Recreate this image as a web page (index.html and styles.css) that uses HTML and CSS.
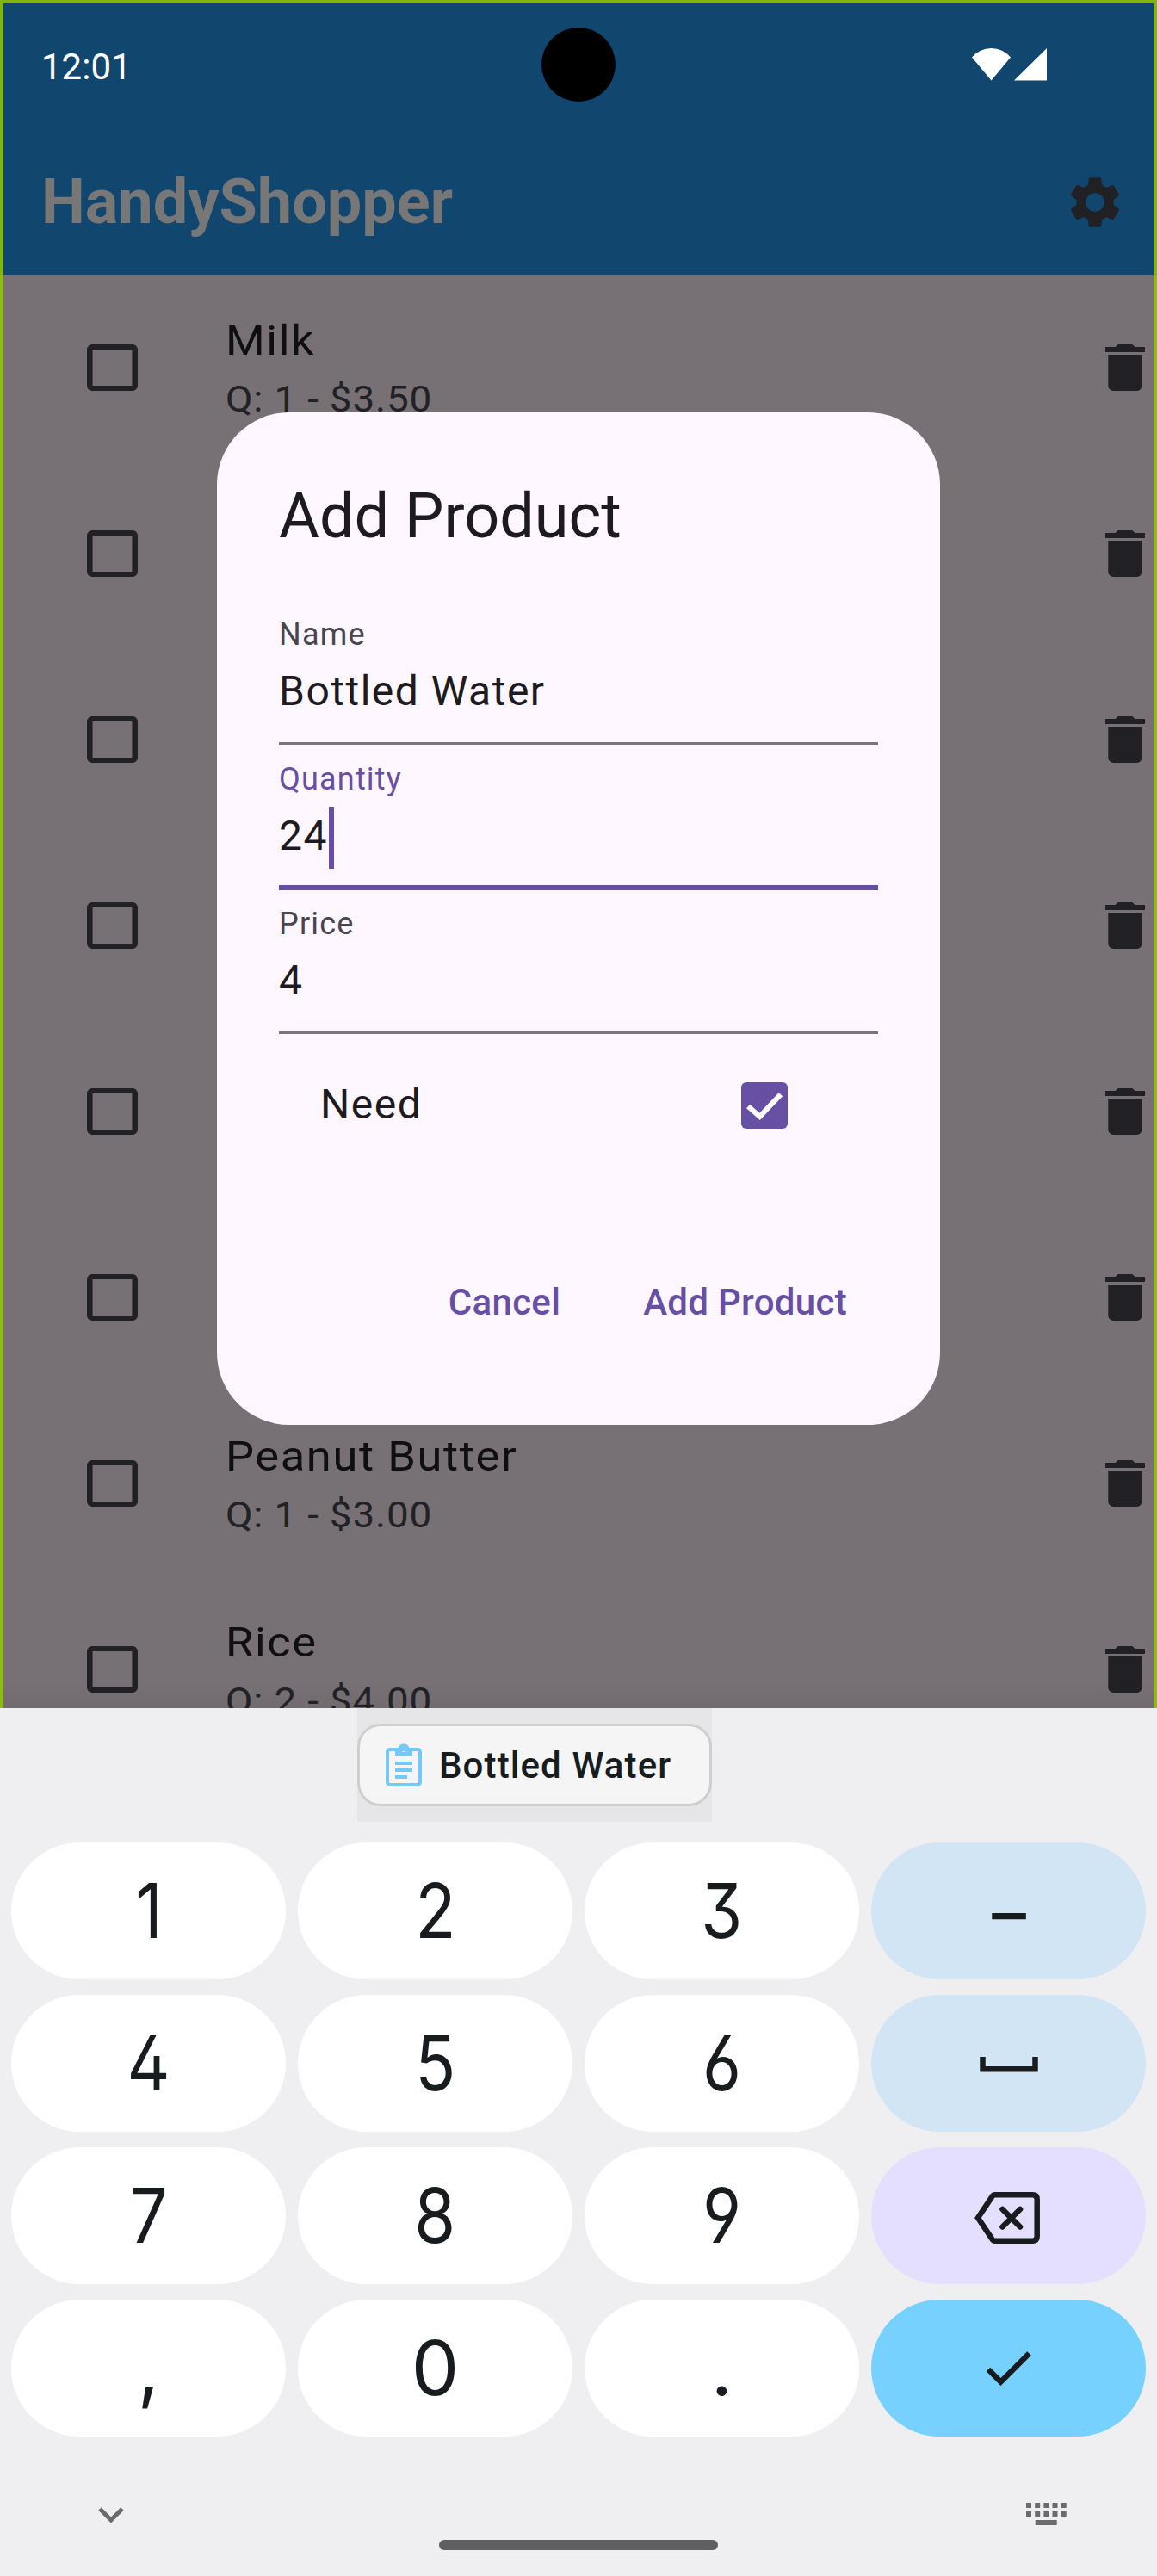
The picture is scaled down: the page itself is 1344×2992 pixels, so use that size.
FILE: index.html
```html
<!DOCTYPE html>
<html lang="en">
<head>
<meta charset="utf-8">
<title>HandyShopper</title>
<link rel="stylesheet" href="styles.css">
</head>
<body>
<svg class="defs" aria-hidden="true">
  <symbol id="box" viewBox="3 3 18 18" preserveAspectRatio="none"><path d="M19 5v14H5V5h14m0-2H5c-1.1 0-2 .9-2 2v14c0 1.1.9 2 2 2h14c1.1 0 2-.9 2-2V5c0-1.1-.9-2-2-2z"/></symbol>
  <symbol id="trash" viewBox="5 3 14 18" preserveAspectRatio="none"><path d="M6 19c0 1.1.9 2 2 2h8c1.1 0 2-.9 2-2V7H6v12zM19 4h-3.5l-1-1h-5l-1 1H5v2h14V4z"/></symbol>
</svg>
<div class="screen">
  <div class="app">
    <header class="top">
      <div class="status">
        <span class="time">12:01</span>
        <svg class="signals" width="87" height="38" viewBox="0 0 87 38"><path d="M22.5 37.5L0 10.5Q9 0 22.500 0T45 10.500z"/><path d="M49 37.500h38V0z"/></svg>
      </div>
      <div class="bar">
        <h1 class="brand">HandyShopper</h1>
        <svg class="gear" width="72" height="72" viewBox="0 0 24 24"><path d="M19.14 12.94c.04-.3.06-.61.06-.94 0-.32-.02-.64-.07-.94l2.030-1.580c.18-.14.23-.41.12-.61l-1.920-3.320c-.12-.22-.37-.29-.59-.22l-2.390.96c-.5-.38-1.030-.7-1.620-.94l-.36-2.540c-.04-.24-.24-.41-.48-.41h-3.840c-.24 0-.43.17-.47.41l-.36 2.540c-.59.24-1.130.57-1.620.94l-2.390-.96c-.22-.08-.47 0-.59.22L2.740 8.870c-.12.21-.08.47.12.61l2.030 1.580c-.05.3-.09.63-.09.94s.02.64.07.94l-2.030 1.580c-.18.14-.23.41-.12.61l1.920 3.320c.12.22.37.29.59.22l2.390-.96c.5.38 1.030.7 1.620.94l.36 2.540c.05.24.24.41.48.41h3.840c.24 0 .44-.17.47-.41l.36-2.540c.59-.24 1.130-.56 1.620-.94l2.390.96c.22.08.47 0 .59-.22l1.920-3.320c.12-.22.07-.47-.12-.61l-2.010-1.580zM12 15.600c-1.980 0-3.600-1.620-3.600-3.600s1.620-3.600 3.600-3.600 3.600 1.620 3.600 3.600-1.620 3.600-3.600 3.600z"/></svg>
      </div>
      <div class="camera"></div>
    </header>
    <main class="list">
      <div class="row"><svg class="tick"><use href="#box"/></svg><div class="item"><div class="name">Milk</div><div class="meta">Q: 1 - $3.50</div></div><svg class="bin"><use href="#trash"/></svg></div>
      <div class="row"><svg class="tick"><use href="#box"/></svg><svg class="bin"><use href="#trash"/></svg></div>
      <div class="row"><svg class="tick"><use href="#box"/></svg><svg class="bin"><use href="#trash"/></svg></div>
      <div class="row"><svg class="tick"><use href="#box"/></svg><svg class="bin"><use href="#trash"/></svg></div>
      <div class="row"><svg class="tick"><use href="#box"/></svg><svg class="bin"><use href="#trash"/></svg></div>
      <div class="row"><svg class="tick"><use href="#box"/></svg><svg class="bin"><use href="#trash"/></svg></div>
      <div class="row"><svg class="tick"><use href="#box"/></svg><div class="item"><div class="name">Peanut Butter</div><div class="meta">Q: 1 - $3.00</div></div><svg class="bin"><use href="#trash"/></svg></div>
      <div class="row"><svg class="tick"><use href="#box"/></svg><div class="item"><div class="name">Rice</div><div class="meta">Q: 2 - $4.00</div></div><svg class="bin"><use href="#trash"/></svg></div>
    </main>
    <section class="dialog">
      <h2 class="heading">Add Product</h2>
      <div class="field"><div class="label">Name</div><div class="value">Bottled Water</div></div>
      <div class="field focused"><div class="label">Quantity</div><div class="value">24<span class="caret"></span></div></div>
      <div class="field"><div class="label">Price</div><div class="value">4</div></div>
      <div class="need">
        <span class="need-text">Need</span>
        <svg width="54" height="54" viewBox="3 3 18 18"><rect class="checked" x="3" y="3" width="18" height="18" rx="2"/><path class="mark" d="M5.700 12.300L10.200 16.300L18.300 7.700"/></svg>
      </div>
      <div class="actions"><span class="btn">Cancel</span><span class="btn">Add Product</span></div>
    </section>
  </div>
  <div class="keyboard">
    <div class="suggest">
      <div class="chip">
        <svg class="clip" width="42" height="50" viewBox="0 0 42 50"><rect class="sheet" x="2" y="7" width="38" height="41" rx="3"/><path fill-rule="evenodd" d="M11 5h3.500a7 7 0 0 1 13 0H31v10H11zM21 5a2.500 2.500 0 1 0 0 5a2.500 2.500 0 0 0 0-5zM11 21h20v4H11zM11 29h20v4H11zM11 37h14v4H11z"/></svg>
        <span class="chip-text">Bottled Water</span>
      </div>
    </div>
    <div class="keys">
      <div class="key"><span class="digit">1</span></div><div class="key"><span class="digit">2</span></div><div class="key"><span class="digit">3</span></div><div class="key soft"><span class="dash">–</span></div>
      <div class="key"><span class="digit">4</span></div><div class="key"><span class="digit">5</span></div><div class="key"><span class="digit">6</span></div>
      <div class="key soft"><svg class="space" width="68" height="18" viewBox="0 0 68 18"><path d="M3.500 0V14.300H64.500V0"/></svg></div>
      <div class="key"><span class="digit">7</span></div><div class="key"><span class="digit">8</span></div><div class="key"><span class="digit">9</span></div>
      <div class="key lilac"><svg class="erase" width="76" height="60" viewBox="0 0 76 60"><path d="M24 3.300H67.500Q72.700 3.300 72.700 8.500V51.500Q72.700 56.700 67.500 56.700H24Q21.500 56.700 20.300 54.500L4 30L20.300 5.500Q21.500 3.300 24 3.300z"/><path class="cross" d="M32.500 20L53 40.500M53 20L32.500 40.500"/></svg></div>
      <div class="key"><span>,</span></div><div class="key"><span>0</span></div><div class="key"><span>.</span></div>
      <div class="key blue"><svg class="done" width="54" height="40" viewBox="0 0 54 40"><path d="M3 21L17.500 35.500L50.500 2.500"/></svg></div>
    </div>
    <div class="nav">
      <svg class="chev" width="30" height="18" viewBox="0 0 30 18"><path d="M2 2L15 15L28 2"/></svg>
      <div class="home"></div>
      <svg class="kbd" width="47" height="26" viewBox="0 0 47 26"><path d="M0 0h6v6H0zM10.200 0h6v6h-6zM20.400 0h6v6h-6zM30.500 0h6v6h-6zM40.700 0h6v6h-6zM0 10h6v6H0zM10.200 10h6v6h-6zM20.400 10h6v6h-6zM30.500 10h6v6h-6zM40.700 10h6v6h-6zM10.700 20h25v6h-25z"/></svg>
    </div>
  </div>
</div>
</body>
</html>
```
FILE: styles.css
```css
* { box-sizing: border-box; margin: 0; padding: 0; }
body { font-family: Roboto, "Liberation Sans", sans-serif; background: #efeff1; }
svg { display: block; flex: none; }
.defs { position: absolute; width: 0; height: 0; }
.screen { width: 1344px; height: 2992px; display: flex; flex-direction: column; overflow: hidden; }

.app { position: relative; height: 1984px; flex: none; overflow: hidden; background: linear-gradient(#777175 1955px, #716b6f 1984px); }
.app::after { content: ""; position: absolute; inset: 0; border: 4px solid rgba(148, 200, 3, .85); border-bottom: 0; }
.top { position: relative; height: 319px; background: #11466f; }
.status { height: 155px; padding: 0 128px 0 48px; display: flex; align-items: center; justify-content: space-between; color: #fff; }
.time { font-size: 42px; line-height: 60px; }
.signals { fill: #fff; margin-bottom: 6px; }
.bar { height: 164px; padding: 0 36px 5px 48px; display: flex; align-items: center; justify-content: space-between; }
.brand { font-size: 72px; line-height: 84px; font-weight: 700; color: #777; }
.gear { fill: #212024; }
.camera { position: absolute; left: 629px; top: 32px; width: 86px; height: 86px; border-radius: 50%; background: #000; }

.row { height: 216px; padding: 0 14px 0 101px; display: flex; align-items: center; }
.tick { width: 59px; height: 54px; fill: #212024; }
.bin { width: 46px; height: 54px; margin-left: auto; fill: #212024; }
.item { align-self: flex-start; margin-left: 102px; padding-top: 40px; transform: scaleX(1.0909); transform-origin: 0 0; white-space: nowrap; }
.name { font-size: 48px; line-height: 73px; letter-spacing: 1.5px; color: #0f0f10; }
.meta { font-size: 42px; line-height: 63px; letter-spacing: .75px; color: #222226; }

.dialog { position: absolute; left: 252px; top: 479px; width: 840px; height: 1176px; padding: 73px 72px 0; border-radius: 84px; background: #fef7ff; color: #1d1b20; }
.heading { font-size: 72px; line-height: 96px; font-weight: 400; margin-bottom: 49px; }
.field { position: relative; height: 168px; padding-top: 16px; border-bottom: 3px solid #79747e; letter-spacing: 1.5px; }
.focused { border-bottom-color: transparent; }
.focused::after { content: ""; position: absolute; left: 0; right: 0; bottom: -4px; height: 6px; background: #6750a4; }
.label { font-size: 36px; line-height: 48px; margin-bottom: 6px; letter-spacing: 1.2px; color: #49454f; }
.focused .label { color: #6750a4; }
.value { font-size: 48px; line-height: 72px; display: flex; }
.caret { width: 6px; height: 72px; margin: 2px 0 0 1px; background: #6750a4; }
.need { height: 165px; padding: 0 105px 0 48px; display: flex; align-items: center; justify-content: space-between; }
.need-text { font-size: 48px; line-height: 72px; letter-spacing: 1.5px; padding-bottom: 1px; }
.checked { fill: #6750a4; }
.mark { fill: none; stroke: #fff; stroke-width: 2; }
.actions { height: 145px; margin-top: 74px; display: flex; align-items: center; justify-content: flex-end; gap: 24px; }
.btn { padding: 0 36px; font-size: 42px; line-height: 60px; font-weight: 500; letter-spacing: .3px; color: #6750a4; }

.keyboard { height: 1008px; flex: none; display: flex; flex-direction: column; background: #efeff1; }
.suggest { width: 412px; height: 132px; margin-left: 415px; display: flex; align-items: center; background: #e6e6e8; }
.chip { width: 412px; height: 96px; padding-left: 30px; display: flex; align-items: center; border: 3px solid #cecece; border-radius: 27px; background: #f5f5f5; }
.clip { fill: #74c9f8; }
.sheet { fill: none; stroke: #74c9f8; stroke-width: 4; }
.chip-text { margin: 1px 0 0 20px; font-size: 42px; line-height: 60px; font-weight: 500; letter-spacing: 1.1px; color: #171c1f; white-space: nowrap; }
.keys { margin-top: 24px; padding: 0 13px; display: grid; grid-template-columns: repeat(4, 319px); grid-auto-rows: 159px; column-gap: 14px; row-gap: 18px; }
.key { display: flex; align-items: center; justify-content: center; border-radius: 80px; background: #fff; color: #191c1e; font-family: Inter, sans-serif; font-size: 88px; line-height: 159px; font-feature-settings: "ss01"; }
.digit { transform: scaleX(.88); }
.dash { padding-top: 4px; transform: scaleX(.9); }
.soft { background: #d2e5f4; }
.lilac { background: #e4deff; }
.blue { background: #76d1ff; }
.key svg path { fill: none; stroke: #191c1e; stroke-width: 6.500; }
.key .cross { stroke-linecap: round; }
.space { margin-top: 2px; }
.erase { margin: 5px 4px 0 0; }
.done { margin-top: 1px; }
.nav { flex: 1; padding: 0 105px 0 114px; display: flex; justify-content: space-between; align-items: flex-start; }
.chev { margin-top: 82px; fill: none; stroke: #6b6b6b; stroke-width: 5; }
.home { width: 324px; height: 12px; margin: 120px 0 0 8px; border-radius: 6px; background: #5f5f5f; }
.kbd { margin-top: 77px; fill: #6b6b6b; }
```
